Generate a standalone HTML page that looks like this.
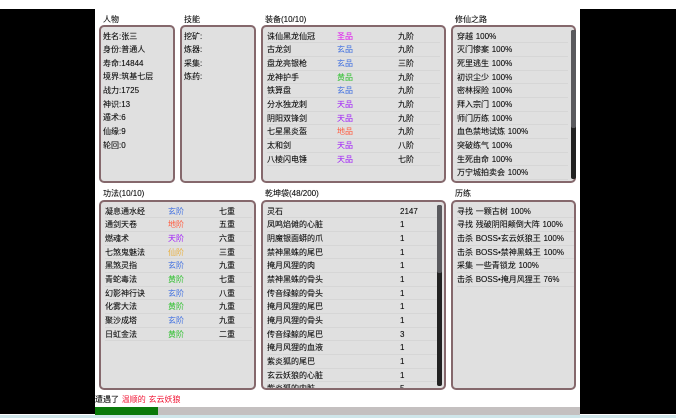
<!DOCTYPE html>
<html lang="zh"><head><meta charset="utf-8"><style>
html,body{margin:0;padding:0;width:676px;height:418px;overflow:hidden;background:#fff}
body{position:relative;font:8px/13.7px "Liberation Sans","Noto Sans CJK SC","WenQuanYi Zen Hei",sans-serif;color:#111;text-shadow:0 0 .4px rgba(0,0,0,.55);word-spacing:.5px}
.abs,.p,.h,.sb,.sb i{position:absolute}
.p{box-sizing:border-box;border:2px solid #85686c;border-radius:5px;background:#e0e0e0;overflow:hidden}
.h{line-height:12px;color:#111}
.r{position:relative;height:13.7px;border-bottom:1px solid #d6d6d6;box-sizing:border-box;white-space:nowrap}
.r span{position:absolute;top:0}
.t{position:relative;height:13.65px;white-space:nowrap}
.sb{background:#222;border-radius:2px;width:5px}
.sb i{left:0;top:0;width:5px;background:#5a5a5e;border-radius:2px}
.x,.g,.hu,.t1,.d,.s{text-shadow:none}
.x{color:#3f6fe0}.g{color:#e010f0}.hu{color:#30c030}.t1{color:#a020f8}.d{color:#ff5c40}.s{color:#e8b040}
#w{position:absolute;left:0;top:0;width:676px;height:418px;filter:blur(.25px)}
</style></head><body><div id="w">
<div class="abs" style="left:0;top:9px;width:95px;height:405px;background:#000"></div>
<div class="abs" style="left:580px;top:9px;width:96px;height:405px;background:#000"></div>
<div class="abs" style="left:95px;top:407px;width:485px;height:8px;background:#c4c0c0"></div>
<div class="abs" style="left:95px;top:407px;width:63px;height:8px;background:#0a7a0a"></div>
<div class="abs" style="left:0;top:415px;width:676px;height:3px;background:#cfe6ea"></div>

<div class="h" style="left:103px;top:14px">人物</div>
<div class="h" style="left:184px;top:14px">技能</div>
<div class="h" style="left:265px;top:14px">装备(10/10)</div>
<div class="h" style="left:455px;top:14px">修仙之路</div>
<div class="h" style="left:103px;top:188px">功法(10/10)</div>
<div class="h" style="left:265px;top:188px">乾坤袋(48/200)</div>
<div class="h" style="left:455px;top:188px">历练</div>

<div class="p" style="left:99px;top:25px;width:76px;height:158px;padding:2.5px 0 0 2px">
<div class="t">姓名:张三</div><div class="t">身份:普通人</div><div class="t">寿命:14844</div><div class="t">境界:筑基七层</div><div class="t">战力:1725</div><div class="t">神识:13</div><div class="t">遁术:6</div><div class="t">仙缘:9</div><div class="t">轮回:0</div>
</div>
<div class="p" style="left:180px;top:25px;width:76px;height:158px;padding:2.5px 0 0 2px">
<div class="t">挖矿:</div><div class="t">炼器:</div><div class="t">采集:</div><div class="t">炼药:</div>
</div>

<div class="p" style="left:261px;top:25px;width:185px;height:158px;padding:2.5px 4px 0 4px">
<div class="r"><span style="left:0">诛仙黑龙仙冠</span><span style="left:70px" class="g">圣品</span><span style="left:131px">九阶</span></div>
<div class="r"><span style="left:0">古龙剑</span><span style="left:70px" class="x">玄品</span><span style="left:131px">九阶</span></div>
<div class="r"><span style="left:0">盘龙亮银枪</span><span style="left:70px" class="x">玄品</span><span style="left:131px">三阶</span></div>
<div class="r"><span style="left:0">龙神护手</span><span style="left:70px" class="hu">黄品</span><span style="left:131px">九阶</span></div>
<div class="r"><span style="left:0">铁算盘</span><span style="left:70px" class="x">玄品</span><span style="left:131px">九阶</span></div>
<div class="r"><span style="left:0">分水独龙刺</span><span style="left:70px" class="t1">天品</span><span style="left:131px">九阶</span></div>
<div class="r"><span style="left:0">阴阳双锋剑</span><span style="left:70px" class="t1">天品</span><span style="left:131px">九阶</span></div>
<div class="r"><span style="left:0">七星黑炎盔</span><span style="left:70px" class="d">地品</span><span style="left:131px">九阶</span></div>
<div class="r"><span style="left:0">太和剑</span><span style="left:70px" class="t1">天品</span><span style="left:131px">八阶</span></div>
<div class="r"><span style="left:0">八棱闪电锤</span><span style="left:70px" class="t1">天品</span><span style="left:131px">七阶</span></div>
</div>

<div class="p" style="left:451px;top:25px;width:125px;height:158px;padding:2.5px 6px 0 4px">
<div class="r">穿越 100%</div><div class="r">灭门惨案 100%</div><div class="r">死里逃生 100%</div><div class="r">初识尘少 100%</div><div class="r">密林探险 100%</div><div class="r">拜入宗门 100%</div><div class="r">师门历练 100%</div><div class="r">血色禁地试炼 100%</div><div class="r">突破练气 100%</div><div class="r">生死由命 100%</div><div class="r">万宁城拍卖会 100%</div>
</div>
<div class="sb" style="left:571px;top:30px;height:149px"><i style="height:98px"></i></div>

<div class="p" style="left:99px;top:200px;width:157px;height:190px;padding:2.5px 2px 0 4px">
<div class="r"><span style="left:0">凝息通水经</span><span style="left:63px" class="x">玄阶</span><span style="left:114px">七重</span></div>
<div class="r"><span style="left:0">通剑天卷</span><span style="left:63px" class="d">地阶</span><span style="left:114px">五重</span></div>
<div class="r"><span style="left:0">燃魂术</span><span style="left:63px" class="t1">天阶</span><span style="left:114px">六重</span></div>
<div class="r"><span style="left:0">七煞鬼魅法</span><span style="left:63px" class="s">仙阶</span><span style="left:114px">三重</span></div>
<div class="r"><span style="left:0">黑煞灵指</span><span style="left:63px" class="x">玄阶</span><span style="left:114px">九重</span></div>
<div class="r"><span style="left:0">青蛇毒法</span><span style="left:63px" class="hu">黄阶</span><span style="left:114px">七重</span></div>
<div class="r"><span style="left:0">幻影神行诀</span><span style="left:63px" class="x">玄阶</span><span style="left:114px">八重</span></div>
<div class="r"><span style="left:0">化雾大法</span><span style="left:63px" class="hu">黄阶</span><span style="left:114px">九重</span></div>
<div class="r"><span style="left:0">聚沙成塔</span><span style="left:63px" class="x">玄阶</span><span style="left:114px">九重</span></div>
<div class="r"><span style="left:0">日虹金法</span><span style="left:63px" class="hu">黄阶</span><span style="left:114px">二重</span></div>
</div>

<div class="p" style="left:261px;top:200px;width:185px;height:190px;padding:2.5px 0 0 4px">
<div style="height:183px;width:170px;overflow:hidden">
<div class="r"><span style="left:0">灵石</span><span style="left:133px">2147</span></div>
<div class="r"><span style="left:0">凤鸣焰傩的心脏</span><span style="left:133px">1</span></div>
<div class="r"><span style="left:0">阴魔银面蟒的爪</span><span style="left:133px">1</span></div>
<div class="r"><span style="left:0">禁神黑蛛的尾巴</span><span style="left:133px">1</span></div>
<div class="r"><span style="left:0">掩月风狸的肉</span><span style="left:133px">1</span></div>
<div class="r"><span style="left:0">禁神黑蛛的骨头</span><span style="left:133px">1</span></div>
<div class="r"><span style="left:0">传音绿鲸的骨头</span><span style="left:133px">1</span></div>
<div class="r"><span style="left:0">掩月风狸的尾巴</span><span style="left:133px">1</span></div>
<div class="r"><span style="left:0">掩月风狸的骨头</span><span style="left:133px">1</span></div>
<div class="r"><span style="left:0">传音绿鲸的尾巴</span><span style="left:133px">3</span></div>
<div class="r"><span style="left:0">掩月风狸的血液</span><span style="left:133px">1</span></div>
<div class="r"><span style="left:0">紫炎狐的尾巴</span><span style="left:133px">1</span></div>
<div class="r"><span style="left:0">玄云妖狼的心脏</span><span style="left:133px">1</span></div>
<div class="r"><span style="left:0">紫炎狐的内脏</span><span style="left:133px">5</span></div>
</div></div>
<div class="sb" style="left:437px;top:205px;height:181px"><i style="height:68px"></i></div>

<div class="p" style="left:451px;top:200px;width:125px;height:190px;padding:2.5px 0 0 4px">
<div class="r">寻找 一颗古树 100%</div><div class="r">寻找 残破阴阳颠倒大阵 100%</div><div class="r">击杀 BOSS•玄云妖狼王 100%</div><div class="r">击杀 BOSS•禁神黑蛛王 100%</div><div class="r">采集 一些青锁龙 100%</div><div class="r">击杀 BOSS•掩月风狸王 76%</div>
</div>

<div class="abs" style="left:95px;top:393px;white-space:nowrap">遭遇了 <span style="color:#f01030;text-shadow:none">温顺的 玄云妖狼</span></div>
</div></body></html>
